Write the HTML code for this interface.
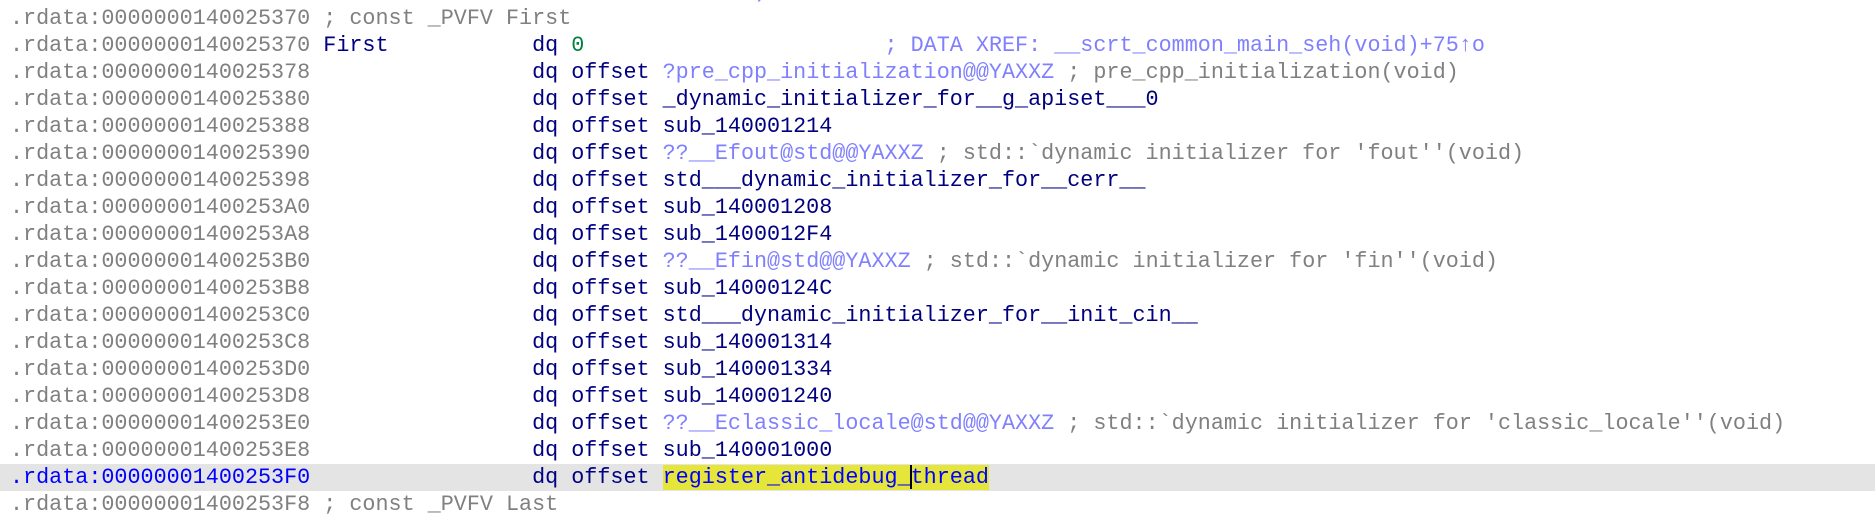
<!DOCTYPE html>
<html><head><meta charset="utf-8"><style>
html,body{margin:0;padding:0;background:#fff;width:1875px;height:502px;overflow:hidden}
#c{position:absolute;left:10px;top:-22px;font-family:"Liberation Mono",monospace;font-size:21.75px;}
.r{height:27px;line-height:27px;width:1875px;margin-left:-10px;padding-left:10px;box-sizing:border-box;white-space:pre}
.a{color:#808080}.n{color:#000080}.g{color:#008040}.p{color:#8080ff}.c{color:#808080}
.hl{background:#e4e4e4}.hl .a{color:#0000ff}
.y{background:#e6e63a;color:#0000ff}
.cur{display:inline-block;width:0;border-left:2px solid #000;height:24px;vertical-align:middle;margin-left:-1px;margin-right:-1px}
</style></head><body><div id="c"><div class="r"><span class="p">                                                         )</span></div><div class="r"><span class="a">.rdata:0000000140025370</span><span class="c"> ; const _PVFV First</span></div><div class="r"><span class="a">.rdata:0000000140025370</span> <span class="n">First           dq </span><span class="g">0</span><span class="p">                       ; DATA XREF: __scrt_common_main_seh(void)+75↑o</span></div><div class="r"><span class="a">.rdata:0000000140025378</span><span class="n">                 dq offset </span><span class="p">?pre_cpp_initialization@@YAXXZ</span><span class="c"> ; pre_cpp_initialization(void)</span></div><div class="r"><span class="a">.rdata:0000000140025380</span><span class="n">                 dq offset _dynamic_initializer_for__g_apiset___0</span></div><div class="r"><span class="a">.rdata:0000000140025388</span><span class="n">                 dq offset sub_140001214</span></div><div class="r"><span class="a">.rdata:0000000140025390</span><span class="n">                 dq offset </span><span class="p">??__Efout@std@@YAXXZ</span><span class="c"> ; std::`dynamic initializer for 'fout''(void)</span></div><div class="r"><span class="a">.rdata:0000000140025398</span><span class="n">                 dq offset std___dynamic_initializer_for__cerr__</span></div><div class="r"><span class="a">.rdata:00000001400253A0</span><span class="n">                 dq offset sub_140001208</span></div><div class="r"><span class="a">.rdata:00000001400253A8</span><span class="n">                 dq offset sub_1400012F4</span></div><div class="r"><span class="a">.rdata:00000001400253B0</span><span class="n">                 dq offset </span><span class="p">??__Efin@std@@YAXXZ</span><span class="c"> ; std::`dynamic initializer for 'fin''(void)</span></div><div class="r"><span class="a">.rdata:00000001400253B8</span><span class="n">                 dq offset sub_14000124C</span></div><div class="r"><span class="a">.rdata:00000001400253C0</span><span class="n">                 dq offset std___dynamic_initializer_for__init_cin__</span></div><div class="r"><span class="a">.rdata:00000001400253C8</span><span class="n">                 dq offset sub_140001314</span></div><div class="r"><span class="a">.rdata:00000001400253D0</span><span class="n">                 dq offset sub_140001334</span></div><div class="r"><span class="a">.rdata:00000001400253D8</span><span class="n">                 dq offset sub_140001240</span></div><div class="r"><span class="a">.rdata:00000001400253E0</span><span class="n">                 dq offset </span><span class="p">??__Eclassic_locale@std@@YAXXZ</span><span class="c"> ; std::`dynamic initializer for 'classic_locale''(void)</span></div><div class="r"><span class="a">.rdata:00000001400253E8</span><span class="n">                 dq offset sub_140001000</span></div><div class="r hl"><span class="a">.rdata:00000001400253F0</span><span class="n">                 dq offset </span><span class="y">register_antidebug_<span class="cur"></span>thread</span></div><div class="r"><span class="a">.rdata:00000001400253F8</span><span class="c"> ; const _PVFV Last</span></div></div></body></html>
